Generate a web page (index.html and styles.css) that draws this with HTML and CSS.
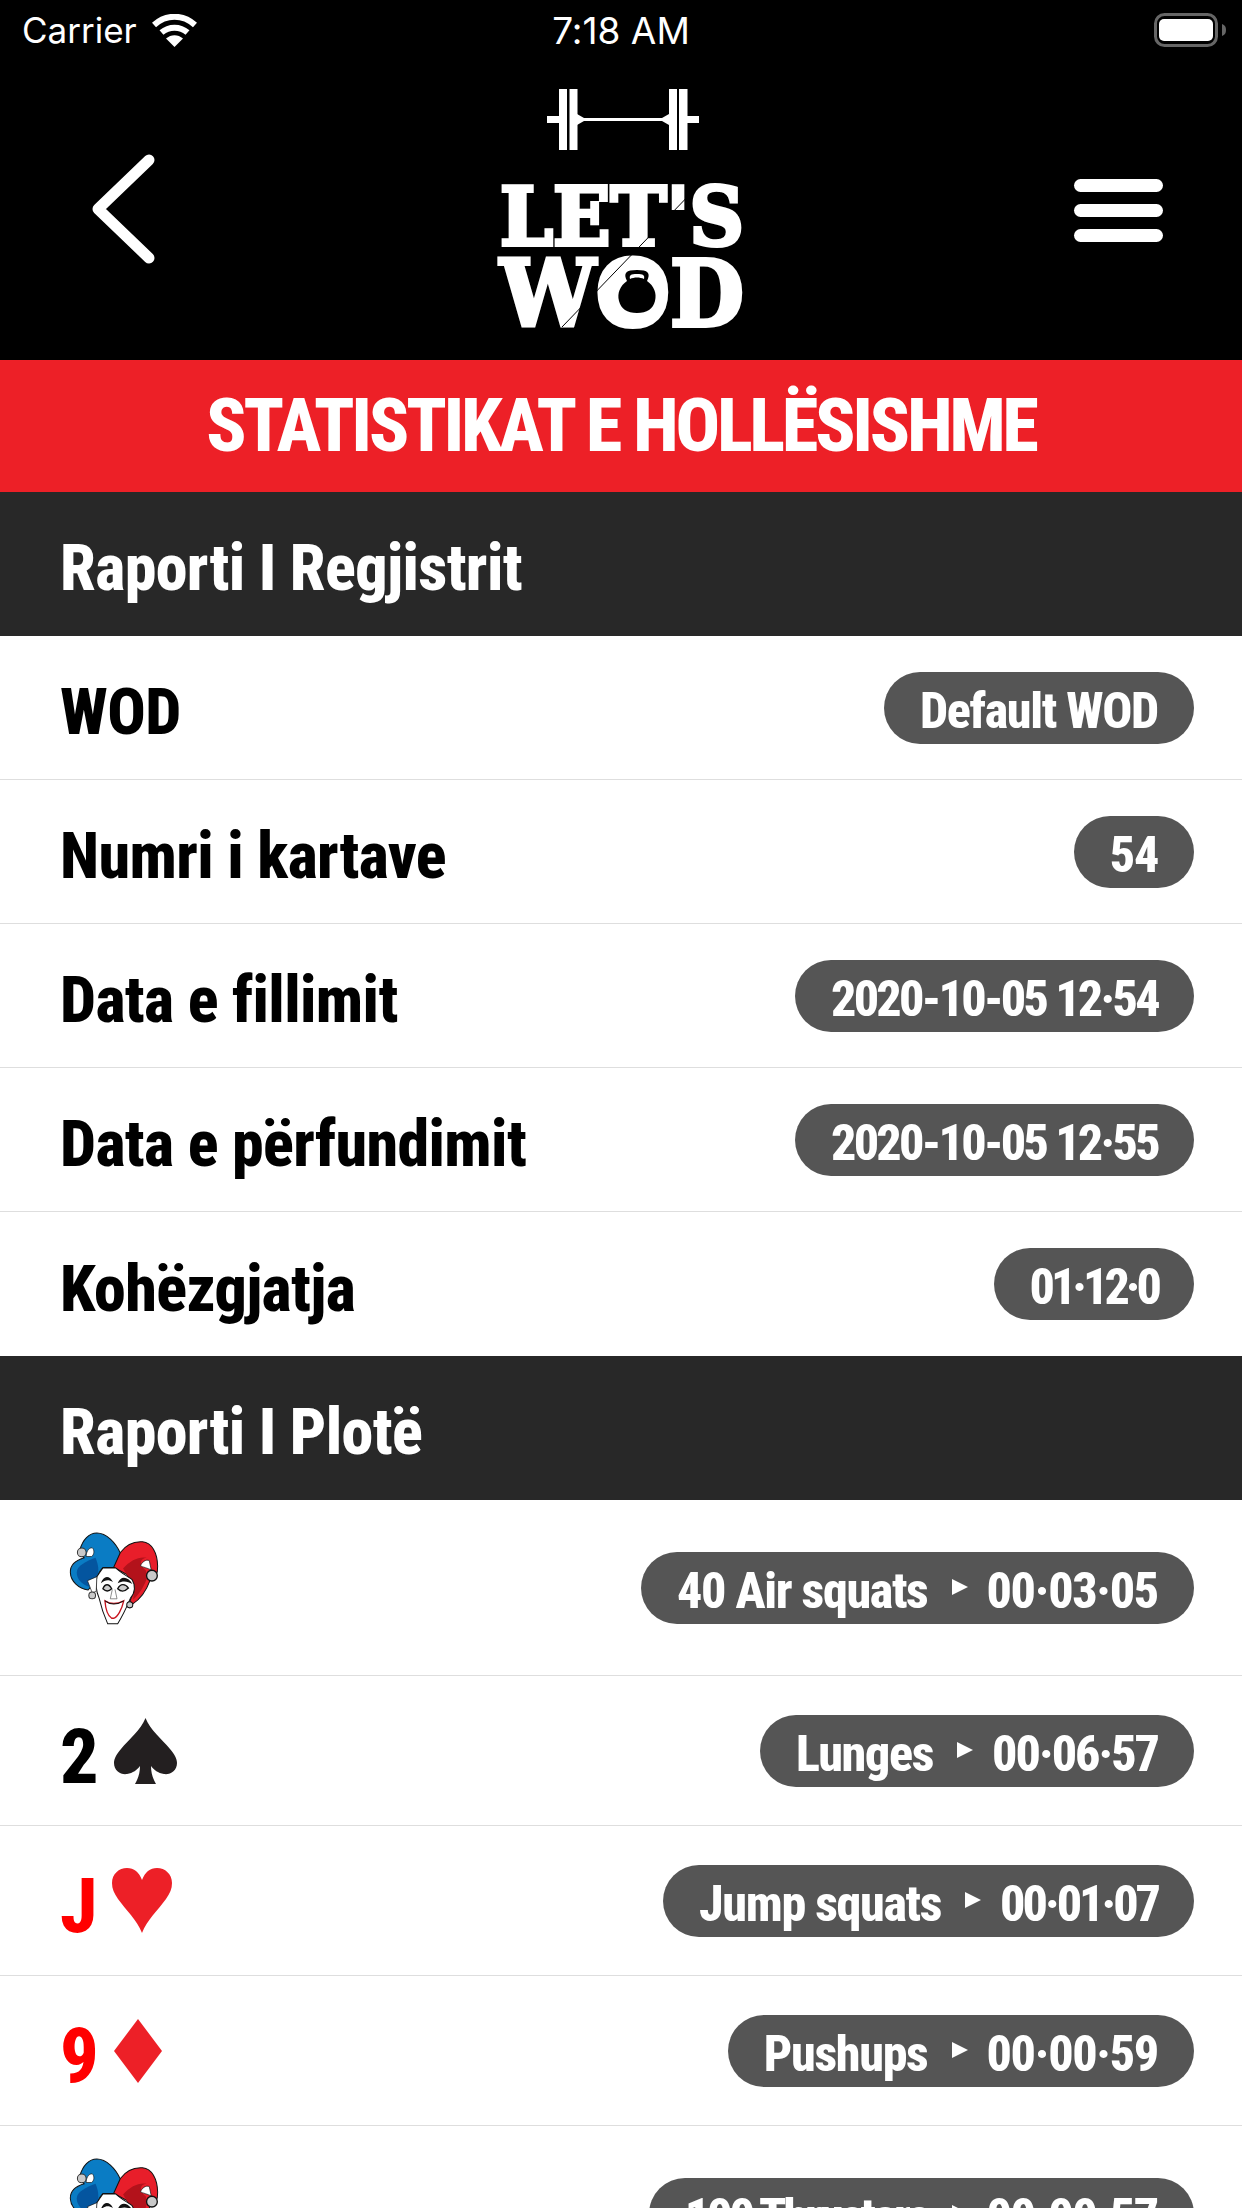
FILE: index.html
```html
<!DOCTYPE html>
<html lang="sq">
<head>
    <meta charset="UTF-8">
    <meta name="viewport" content="width=device-width, initial-scale=1.0">
    <title>Statistikat - Let's WOD</title>
    <link rel="stylesheet" href="styles.css">
</head>
<body>
    <svg class="defs" width="0" height="0">
        <symbol id="jester" viewBox="90 99 266 280">
            <path d="M172 102C200 102 228 130 242 162L224 205H190C180 215 172 235 170 244L146 272C118 268 94 246 93 220C92 200 108 184 134 176C124 166 118 160 122 150C130 122 148 102 172 102Z" fill="#0a7cc4" stroke="#111" stroke-width="3"/>
            <path d="M112 220C112 200 140 186 168 176C176 196 180 214 172 236L148 262C128 256 112 240 112 220Z" fill="#04559f"/>
            <path d="M242 160C258 138 282 126 308 128C336 130 352 162 353 200L352 218L330 244C320 272 300 300 278 314L270 306L285 266L262 226L222 204Z" fill="#e81e2a" stroke="#111" stroke-width="3"/>
            <path d="M250 208C272 184 296 172 320 176C300 178 296 196 318 214L320 240C310 266 296 288 280 300L284 264Z" fill="#b3121b"/>
            <path d="M302 200C306 188 318 180 328 184L334 212C322 206 310 204 302 200Z" fill="#fff" stroke="#111" stroke-width="2"/>
            <path d="M140 172C140 160 146 146 158 146C166 152 164 168 156 172Z" fill="#fff" stroke="#111" stroke-width="2"/>
            <path d="M190 206H228C244 222 266 232 276 240C288 258 286 280 272 296C262 320 248 350 234 372H204C194 350 184 320 178 294C170 276 168 252 172 232C178 224 184 214 190 206Z" fill="#fff" stroke="#111" stroke-width="3"/>
            <path d="M144 244L172 232L170 276L158 280Z" fill="#fff" stroke="#111" stroke-width="2"/>
            <path d="M184 252C190 228 210 226 220 248C206 240 196 242 184 252Z" fill="#111"/>
            <path d="M234 252C242 228 264 230 278 254C262 244 248 244 234 252Z" fill="#111"/>
            <path d="M190 268C196 252 208 252 216 268C208 276 198 276 190 268Z" fill="#ccc" stroke="#111" stroke-width="4"/>
            <path d="M234 268C242 252 256 252 266 266C256 276 244 278 234 268Z" fill="#ccc" stroke="#111" stroke-width="4"/>
            <path d="M196 304C212 314 232 314 252 304C246 330 234 352 222 356H216C206 350 198 330 196 304Z" fill="#fff" stroke="#c8141e" stroke-width="4"/>
            <path d="M196 304C212 316 232 316 252 304" fill="none" stroke="#111" stroke-width="3"/>
            <path d="M218 270L212 298H232L226 270" fill="none" stroke="#555" stroke-width="2"/>
            <circle cx="127" cy="160" r="13" fill="#c9c9c9" stroke="#333" stroke-width="3"/>
            <circle cx="336" cy="229" r="16" fill="#c9c9c9" stroke="#111" stroke-width="4"/>
            <circle cx="158" cy="288" r="10" fill="#c9c9c9" stroke="#333" stroke-width="3"/>
            <circle cx="270" cy="316" r="9" fill="#c9c9c9" stroke="#111" stroke-width="3"/>
        </symbol>
    </svg>

    <div class="top">
        <div class="status-bar">
            <div class="status-left">
                <span>Carrier</span>
                <svg class="wifi" viewBox="0 0 45 33">
                    <path d="M2 11C14 0 31 0 43 11" fill="none" stroke="#fff" stroke-width="6"/>
                    <path d="M9.5 18.5C17 12 28 12 35.5 18.5" fill="none" stroke="#fff" stroke-width="6"/>
                    <path d="M22.5 33L14 24.5C19 20 26 20 31 24.5Z" fill="#fff"/>
                </svg>
            </div>
            <div class="status-time">7:18 AM</div>
            <div class="status-right">
                <svg class="battery" viewBox="0 0 72 34">
                    <rect x="1.5" y="1.5" width="61" height="31" rx="9" fill="none" stroke="#666" stroke-width="3"/>
                    <rect x="5" y="6" width="54" height="22" rx="5" fill="#fff"/>
                    <path d="M68 11C71 12 72 14 72 17C72 20 71 22 68 23Z" fill="#666"/>
                </svg>
            </div>
        </div>

        <div class="nav">
            <svg class="back" viewBox="0 0 63 110">
                <path d="M57 6L6 55L57 104" fill="none" stroke="#fff" stroke-width="11" stroke-linecap="round" stroke-linejoin="round"/>
            </svg>
            <svg class="logo" viewBox="0 0 243 240">
                <rect x="47" y="27" width="14" height="7" fill="#fff"/>
                <rect x="59" y="0" width="8" height="61" fill="#fff"/>
                <rect x="69.5" y="0" width="8" height="61" fill="#fff"/>
                <path d="M77 25L84 29V32L77 36Z" fill="#fff"/>
                <rect x="84" y="29" width="78" height="3" fill="#fff"/>
                <path d="M169 25L162 29V32L169 36Z" fill="#fff"/>
                <rect x="169" y="0" width="8" height="61" fill="#fff"/>
                <rect x="179" y="0" width="8.5" height="61" fill="#fff"/>
                <rect x="186" y="27" width="13" height="7" fill="#fff"/>
                <text class="logo-text" x="0" y="156" font-size="80" textLength="244" lengthAdjust="spacingAndGlyphs">LET'S</text>
                <text class="logo-text" x="0" y="237" font-size="92" textLength="244" lengthAdjust="spacingAndGlyphs">WOD</text>
                <ellipse cx="135" cy="204" rx="32" ry="34" fill="#fff"/>
                <path d="M127 192C123 184 126 181 137 181C148 181 151 184 147 192C154 197 157 204 155 212C153 220 147 224 137 224C127 224 121 220 119 212C117 204 120 197 127 192Z" fill="#000"/>
                <path d="M130 190C129 186 131 185 137 185C143 185 145 186 144 190C140 188 134 188 130 190Z" fill="#fff"/>
                <path d="M62 238L195 100" stroke="#000" stroke-width="1" fill="none"/>
            </svg>
            <div class="burger">
                <span></span>
                <span></span>
                <span></span>
            </div>
        </div>
    </div>

    <div class="banner">STATISTIKAT E HOLLËSISHME</div>

    <div class="section-title">Raporti I Regjistrit</div>
    <div class="row">
        <span class="label">WOD</span>
        <span class="pill">Default WOD</span>
    </div>
    <div class="row">
        <span class="label">Numri i kartave</span>
        <span class="pill">54</span>
    </div>
    <div class="row">
        <span class="label">Data e fillimit</span>
        <span class="pill date">2020-10-05 12·54</span>
    </div>
    <div class="row">
        <span class="label">Data e përfundimit</span>
        <span class="pill date">2020-10-05 12·55</span>
    </div>
    <div class="row no-border">
        <span class="label">Kohëzgjatja</span>
        <span class="pill duration">01·12·0</span>
    </div>

    <div class="section-title">Raporti I Plotë</div>
    <div class="row joker-row">
        <svg class="joker"><use href="#jester"/></svg>
        <span class="pill">40 Air squats<i class="arrow"></i>00·03·05</span>
    </div>
    <div class="row card-row">
        <div class="card">
            <span class="rank">2</span>
            <svg class="suit spade" viewBox="0 0 63 66">
                <path d="M31.5 0C36 12 48 21 56 31C60 36 63 40 63 45C63 53 56 57 50 56C44 55 40 52 37 48C37 55 39 61 42 66H21C24 61 26 55 26 48C23 52 19 55 13 56C7 57 0 53 0 45C0 40 3 36 7 31C15 21 27 12 31.5 0Z"/>
            </svg>
        </div>
        <span class="pill">Lunges<i class="arrow"></i><span class="tight">00·06·57</span></span>
    </div>
    <div class="row card-row">
        <div class="card red">
            <span class="rank">J</span>
            <svg class="suit heart" viewBox="0 0 60 65">
                <path d="M30 65C25 52 14 42 6 31C2 25 0 21 0 15C0 6 7 0 15 0C22 0 27 4 30 12C33 4 38 0 45 0C53 0 60 6 60 15C60 21 58 25 54 31C46 42 35 52 30 65Z"/>
            </svg>
        </div>
        <span class="pill">Jump squats<i class="arrow"></i><span class="tighter">00·01·07</span></span>
    </div>
    <div class="row card-row">
        <div class="card red">
            <span class="rank">9</span>
            <svg class="suit diamond" viewBox="0 0 48 64">
                <path d="M24 0L48 32L24 64L0 32Z"/>
            </svg>
        </div>
        <span class="pill">Pushups<i class="arrow"></i>00·00·59</span>
    </div>
    <div class="row joker-row">
        <svg class="joker"><use href="#jester"/></svg>
        <span class="pill"><span class="tighter">100 Thrusters</span><i class="arrow"></i>00·00·57</span>
    </div>
</body>
</html>
```
FILE: styles.css
```css
html, body {
    height: 2208px;
    overflow: hidden;
}

body {
    margin: 0;
    background-color: white;
    font-family: "Roboto Condensed", Roboto, sans-serif;
    font-stretch: 75%;
    font-weight: 800;
    font-variant-ligatures: none;
    color: black;
}

.defs {
    position: absolute;
}

.top {
    background-color: black;
    height: 360px;
    color: white;
}

.status-bar {
    display: grid;
    grid-template-columns: 1fr auto 1fr;
    align-items: center;
    height: 60px;
    padding: 0 16px;
    font-family: Inter, sans-serif;
    font-stretch: normal;
    font-weight: 400;
    font-size: 35px;
}

.status-left {
    display: flex;
    align-items: center;
    gap: 15px;
    margin-left: 6px;
}

.status-time {
    font-size: 37px;
}

.wifi {
    width: 45px;
    height: 33px;
}

.status-right {
    display: flex;
    justify-content: flex-end;
}

.battery {
    width: 72px;
    height: 34px;
}

.nav {
    display: grid;
    grid-template-columns: 1fr auto 1fr;
    align-items: center;
    height: 298px;
    padding: 0 79px 2px;
}

.back {
    width: 63px;
    height: 110px;
    margin-left: 13px;
}

.logo {
    width: 243px;
    height: 240px;
    overflow: visible;
}

.logo-text {
    font-family: "DejaVu Serif", serif;
    font-weight: 700;
    font-stretch: normal;
    fill: white;
    stroke: white;
    stroke-width: 4px;
}

.burger {
    justify-self: end;
    width: 89px;
    margin-top: 2px;
    display: flex;
    flex-direction: column;
    gap: 12px;
}

.burger span {
    height: 13px;
    background-color: white;
    border-radius: 7px;
}

.banner {
    height: 132px;
    background-color: #ed2027;
    color: white;
    font-size: 74px;
    line-height: 132px;
    letter-spacing: -3px;
    text-align: center;
}

.section-title {
    height: 144px;
    background-color: #282828;
    color: white;
    font-size: 64px;
    line-height: 154px;
    letter-spacing: -0.6px;
    padding-left: 60px;
}

.row {
    display: flex;
    justify-content: space-between;
    align-items: center;
    box-sizing: border-box;
    height: 144px;
    padding: 0 48px 0 60px;
    border-bottom: 1px solid #dedede;
}

.row.no-border {
    border-bottom: none;
}

.joker-row {
    height: 176px;
}

.card-row {
    height: 150px;
}

.label {
    font-size: 64px;
    letter-spacing: -0.6px;
    padding-top: 10px;
}

.pill {
    display: flex;
    align-items: center;
    height: 72px;
    padding: 6px 36px 0;
    box-sizing: border-box;
    background-color: #555;
    color: white;
    font-size: 50px;
    letter-spacing: -1.3px;
    border-radius: 36px;
    white-space: nowrap;
}

.pill.date {
    letter-spacing: -2.7px;
}

.pill.duration {
    letter-spacing: -4px;
}

.tight {
    letter-spacing: -2px;
}

.tighter {
    letter-spacing: -3px;
}

.arrow {
    width: 0;
    height: 0;
    margin: -8px 19px 0 24px;
    border-left: 16px solid white;
    border-top: 8px solid transparent;
    border-bottom: 8px solid transparent;
}

.joker {
    width: 90px;
    height: 94px;
    margin: 0 0 18px 9px;
}

.card {
    display: flex;
    align-items: flex-end;
    gap: 15px;
}

.rank {
    font-size: 76px;
    line-height: 54px;
}

.suit {
    fill: #231f20;
}

.spade {
    width: 63px;
    height: 66px;
}

.heart {
    width: 60px;
    height: 65px;
}

.diamond {
    width: 48px;
    height: 64px;
}

.red .rank {
    color: #ff0000;
}

.red .suit {
    fill: #ed2027;
}
```
